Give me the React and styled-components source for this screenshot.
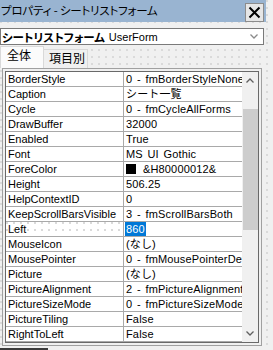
import React from "react";
import styled, { createGlobalStyle, css } from "styled-components";

const GlobalStyle = createGlobalStyle`
  html, body { margin: 0; padding: 0; }
  body {
    background-color: #f0f0f0;
    font-family: "Liberation Sans", "Noto Sans CJK JP", sans-serif;
  }
`;

const dots = css`
  background-image: radial-gradient(circle at 1px 1px, #dadada 0.8px, transparent 1px);
  background-size: 7px 7px;
`;

const Window = styled.div`
  width: 273px;
  height: 350px;
  overflow: hidden;
  display: flex;
  flex-direction: column;
  background-color: #f0f0f0;
  ${dots}
`;

const TitleBar = styled.div`
  width: 266px;
  height: 22px;
  box-sizing: border-box;
  background: #99b4d1;
  display: flex;
  align-items: flex-start;
  justify-content: space-between;
  padding: 3px 2px 0 1px;
`;

const Title = styled.div`
  font-family: "Noto Sans CJK JP", sans-serif;
  font-feature-settings: "palt";
  font-size: 11.5px;
  line-height: 14px;
  color: #000;
  letter-spacing: -0.2px;
`;

const CloseButton = styled.div`
  width: 19px;
  height: 19px;
  box-sizing: border-box;
  border: 1px solid #8c8c8c;
  background: #e6e6e6;
  display: flex;
  align-items: center;
  justify-content: center;
`;

const Body = styled.div`
  display: flex;
  flex-direction: column;
  padding-top: 6px;
`;

const Combo = styled.div`
  width: 264px;
  height: 17px;
  box-sizing: border-box;
  border: 1px solid #7a7a7a;
  background: #fff;
  display: flex;
  align-items: center;
  padding: 0 5px 0 1px;
  font-size: 11px;
  color: #000;
`;

const ComboName = styled.span`
  font-family: "Noto Sans CJK JP", sans-serif;
  font-feature-settings: "palt";
  font-weight: 700;
  font-size: 11.5px;
  margin-right: 4px;
`;

const ComboType = styled.span`
  flex: 1;
`;

const Tabs = styled.div`
  display: flex;
  align-items: flex-end;
  height: 22px;
  margin-top: 1px;
`;

const Tab = styled.div`
  box-sizing: border-box;
  height: ${(p) => (p.$active ? 22 : 19)}px;
  width: 44px;
  border: 1px solid #d9d9d9;
  border-bottom: none;
  ${(p) => (p.$active ? "" : "border-left: none;")}
  background: ${(p) => (p.$active ? "#fbfbfb" : "#f0f0f0")};
  font-family: "Noto Sans CJK JP", sans-serif;
  font-size: 12px;
  line-height: ${(p) => (p.$active ? 15 : 16)}px;
  padding-left: ${(p) => (p.$active ? 6 : 5)}px;
  color: #000;
`;

const GridFrame = styled.div`
  margin-left: 2px;
  width: 260px;
  height: 278px;
  box-sizing: border-box;
  border: 1px solid #a0a0a0;
  padding: 2px;
  background: #f0f0f0;
`;

const GridInner = styled.div`
  height: 100%;
  box-sizing: border-box;
  border: 1px solid #696969;
  display: flex;
  overflow: hidden;
`;

const Grid = styled.div`
  flex: 1;
  display: grid;
  grid-template-columns: 118px 1fr;
  grid-auto-rows: 15px;
  background: #fff;
  min-width: 0;
`;

const NameCell = styled.div`
  box-sizing: border-box;
  border-bottom: 1px solid #a9a9a9;
  border-right: 1px solid #a9a9a9;
  padding-left: 2px;
  font-size: 11px;
  line-height: 14px;
  color: #000;
  white-space: nowrap;
  overflow: hidden;
  ${(p) => p.$focused && dots}
  ${(p) => p.$focused && "background-color: #fff;"}
`;

const ValueCell = styled.div`
  box-sizing: border-box;
  border-bottom: 1px solid #a9a9a9;
  padding-left: 1px;
  font-size: 11px;
  line-height: 14px;
  letter-spacing: 0.15px;
  word-spacing: 1.5px;
  color: #000;
  white-space: nowrap;
  overflow: hidden;
  display: flex;
  align-items: center;
  min-width: 0;
`;

const ValueText = styled.span`
  padding: 0 1px;
  ${(p) =>
    p.$selected &&
    css`
      background: #0078d7;
      color: #fff;
    `}
`;

const Swatch = styled.span`
  display: inline-block;
  width: 10px;
  height: 10px;
  background: #000;
  margin: 0 6px 0 1px;
  flex: none;
`;

const ScrollBar = styled.div`
  width: 16px;
  flex: none;
  background: #f0f0f0;
  display: flex;
  flex-direction: column;
`;

const ArrowBox = styled.div`
  height: 17px;
  display: flex;
  align-items: center;
  justify-content: center;
  flex: none;
`;

const Track = styled.div`
  flex: 1;
  display: flex;
  flex-direction: column;
`;

const Thumb = styled.div`
  margin: 20px 0 0 1px;
  width: 15px;
  height: 121px;
  background: #cdcdcd;
`;

const TaskStub = styled.div`
  margin-top: 2px;
  width: 48px;
  height: 3px;
  background: #3a3a3a;
`;

const rows = [
  ["BorderStyle", "0 - fmBorderStyleNone"],
  ["Caption", "シート一覧"],
  ["Cycle", "0 - fmCycleAllForms"],
  ["DrawBuffer", "32000"],
  ["Enabled", "True"],
  ["Font", "MS UI Gothic"],
  ["ForeColor", "&H80000012&", "swatch"],
  ["Height", "506.25"],
  ["HelpContextID", "0"],
  ["KeepScrollBarsVisible", "3 - fmScrollBarsBoth"],
  ["Left", "860", "selected"],
  ["MouseIcon", "(なし)"],
  ["MousePointer", "0 - fmMousePointerDefault"],
  ["Picture", "(なし)"],
  ["PictureAlignment", "2 - fmPictureAlignmentCenter"],
  ["PictureSizeMode", "0 - fmPictureSizeModeClip"],
  ["PictureTiling", "False"],
  ["RightToLeft", "False"],
];

const Chevron = ({ up, color = "#606060" }) => (
  <svg width="8" height="5" viewBox="0 0 8 5">
    <polyline
      points={up ? "0.5,4.5 4,1 7.5,4.5" : "0.5,0.5 4,4 7.5,0.5"}
      fill="none"
      stroke={color}
      strokeWidth="1.3"
    />
  </svg>
);

export default function App() {
  return (
    <>
      <GlobalStyle />
      <Window>
        <TitleBar>
          <Title>プロパティ - シートリストフォーム</Title>
          <CloseButton>
            <svg width="13" height="13" viewBox="0 0 13 13">
              <path d="M1.5 1.5 L11.5 11.5 M11.5 1.5 L1.5 11.5" stroke="#000" strokeWidth="2" />
            </svg>
          </CloseButton>
        </TitleBar>
        <Body>
          <Combo>
            <ComboName>シートリストフォーム</ComboName>
            <ComboType>UserForm</ComboType>
            <Chevron color="#8a8a8a" />
          </Combo>
          <Tabs>
            <Tab $active>全体</Tab>
            <Tab>項目別</Tab>
          </Tabs>
          <GridFrame>
            <GridInner>
              <Grid>
                {rows.map(([name, value, kind]) => (
                  <React.Fragment key={name}>
                    <NameCell $focused={kind === "selected"}>{name}</NameCell>
                    <ValueCell>
                      {kind === "swatch" && <Swatch />}
                      <ValueText $selected={kind === "selected"}>{value}</ValueText>
                    </ValueCell>
                  </React.Fragment>
                ))}
              </Grid>
              <ScrollBar>
                <ArrowBox>
                  <Chevron up />
                </ArrowBox>
                <Track>
                  <Thumb />
                </Track>
                <ArrowBox>
                  <Chevron />
                </ArrowBox>
              </ScrollBar>
            </GridInner>
          </GridFrame>
          <TaskStub />
        </Body>
      </Window>
    </>
  );
}
